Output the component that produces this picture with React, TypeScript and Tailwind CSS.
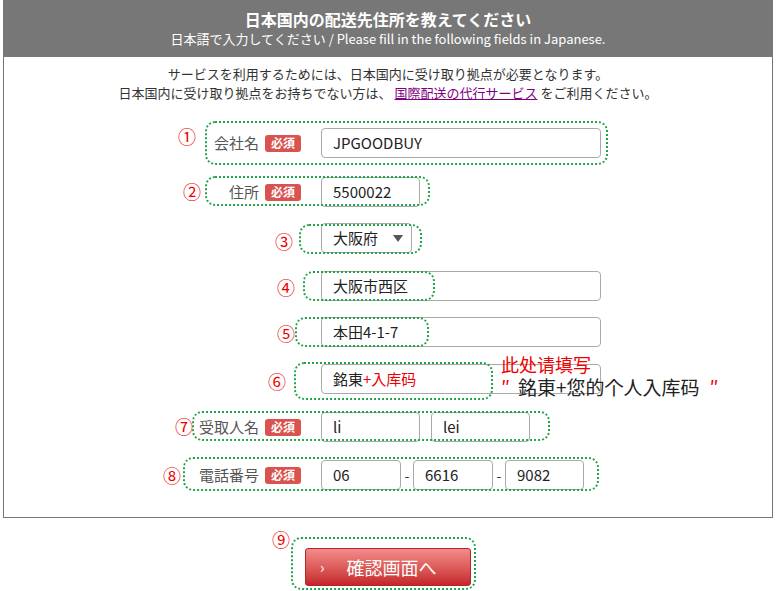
import type { ReactNode } from "react";

const font = { fontFamily: '"Noto Sans CJK JP", "Noto Sans", sans-serif' };

function Badge() {
  return (
    <span className="inline-flex h-[17px] w-[36px] items-center justify-center rounded-[3px] bg-[#d9534f] text-[12px] font-bold leading-none text-white">
      必須
    </span>
  );
}

function Mark({ n, className }: { n: string; className: string }) {
  return (
    <span className={`pointer-events-none absolute text-[18px] leading-[18px] text-[#f00000] ${className}`}>{n}</span>
  );
}

function Dotted({ className }: { className: string }) {
  return (
    <span className={`pointer-events-none absolute rounded-[10px] border-2 border-dotted border-[#23a347] ${className}`} />
  );
}

function Field({ value, className, children }: { value?: string; className: string; children?: ReactNode }) {
  return (
    <div className={`flex h-[30px] items-center rounded-[4px] border border-[#aaa] bg-white pl-[11px] text-[15px] text-[#222] ${className}`}>
      {children ?? value}
    </div>
  );
}

function Row({ label, required, className, children }: { label?: string; required?: boolean; className: string; children: ReactNode }) {
  return (
    <div className={`relative flex h-[30px] items-center ${className}`}>
      <div className="flex w-[297px] items-center justify-end gap-[6px]">
        {label && <span className="text-[15px] text-[#555]">{label}</span>}
        {required && <Badge />}
      </div>
      <div className="ml-[20px] flex items-center">{children}</div>
    </div>
  );
}

export default function App() {
  return (
    <div className="relative h-[591px] w-[776px] overflow-hidden bg-white" style={font}>
      <div className="ml-[3px] w-[770px] border-x border-b border-[#777] pb-[27px]">
        {/* header */}
        <div className="-mx-px h-[57px] bg-[#777] pt-[9px] text-center text-white">
          <div className="text-[16px] font-bold leading-[20px]">日本国内の配送先住所を教えてください</div>
          <div className="mt-[1px] text-[13px] leading-[18px]">
            日本語で入力してください / Please fill in the following fields in Japanese.
          </div>
        </div>

        <div className="pt-[7px] text-center text-[13px] leading-[19px] text-[#333]">
          <p>サービスを利用するためには、日本国内に受け取り拠点が必要となります。</p>
          <p>
            日本国内に受け取り拠点をお持ちでない方は、 <a href="#" className="text-[#800080] underline">国際配送の代行サービス</a> をご利用ください。
          </p>
        </div>

        <Row label="会社名" required className="mt-[26px]">
          <Field value="JPGOODBUY" className="w-[280px]" />
          <Dotted className="left-[201px] top-[-7px] h-[44px] w-[403px]" />
          <Mark n="①" className="left-[174px] top-[-1px]" />
        </Row>

        <Row label="住所" required className="mt-[19px]">
          <Field value="5500022" className="w-[99px]" />
          <Dotted className="left-[201px] top-[-1px] h-[30px] w-[225px]" />
          <Mark n="②" className="left-[179px] top-[5px]" />
        </Row>

        <Row className="mt-[16px]">
          <Field className="w-[91px]">
            <span className="flex-1">大阪府</span>
            <svg width="10" height="7" viewBox="0 0 10 7" className="mr-[8px]">
              <path d="M0 0h10L5 7z" fill="#555" />
            </svg>
          </Field>
          <Dotted className="left-[295px] top-[1px] h-[30px] w-[123px]" />
          <Mark n="③" className="left-[271px] top-[9px]" />
        </Row>

        <Row className="mt-[18px]">
          <Field value="大阪市西区" className="w-[280px]" />
          <Dotted className="left-[299px] top-0 h-[30px] w-[132px]" />
          <Mark n="④" className="left-[273px] top-[7px]" />
        </Row>

        <Row className="mt-[16px]">
          <Field value="本田4-1-7" className="w-[280px]" />
          <Dotted className="left-[291px] top-0 h-[30px] w-[134px]" />
          <Mark n="⑤" className="left-[273px] top-[7px]" />
        </Row>

        <Row className="mt-[17px]">
          <Field className="w-[280px]">
            銘東<span className="text-[#f00000]">+入库码</span>
          </Field>
          <Dotted className="left-[290px] top-[-2px] h-[38px] w-[199px]" />
          <Mark n="⑥" className="left-[264px] top-[8px]" />
          <span className="pointer-events-none absolute left-[497px] top-[-8px] text-[18px] leading-[16px] text-[#f00000]">此处请填写</span>
          <span className="pointer-events-none absolute left-[497px] top-[13px] flex items-center text-[19px] leading-[19px] text-[#222]">
            <span className="mr-[8px] text-[#f00000]">″</span>
            銘東+您的个人入库码
            <span className="ml-[10px] text-[#f00000]">″</span>
          </span>
        </Row>

        <Row label="受取人名" required className="mt-[18px]">
          <div className="flex gap-[11px]">
            <Field value="li" className="w-[99px]" />
            <Field value="lei" className="w-[99px]" />
          </div>
          <Dotted className="left-[188px] top-[-1px] h-[30px] w-[358px]" />
          <Mark n="⑦" className="left-[171px] top-[5px]" />
        </Row>

        <Row label="電話番号" required className="mt-[18px]">
          <Field value="06" className="w-[80px]" />
          <span className="w-[12px] text-center text-[14px] text-[#333]">-</span>
          <Field value="6616" className="w-[80px]" />
          <span className="w-[12px] text-center text-[14px] text-[#333]">-</span>
          <Field value="9082" className="w-[79px]" />
          <Dotted className="left-[179px] top-[-3px] h-[34px] w-[416px]" />
          <Mark n="⑧" className="left-[159px] top-[6px]" />
        </Row>
      </div>

      <div className="mt-[30px] flex justify-center">
        <div className="relative">
          <button className="flex h-[38px] w-[166px] items-center rounded-[3px] border border-[#b3262b] bg-gradient-to-b from-[#f28b8b] to-[#c5232a] pl-[14px] text-white">
            <span className="text-[15px]">›</span>
            <span className="ml-[22px] text-[18px] leading-none">確認画面へ</span>
          </button>
          <Dotted className="left-[-14px] top-[-11px] h-[53px] w-[185px]" />
          <Mark n="⑨" className="left-[-33px] top-[-18px]" />
        </div>
      </div>
    </div>
  );
}
